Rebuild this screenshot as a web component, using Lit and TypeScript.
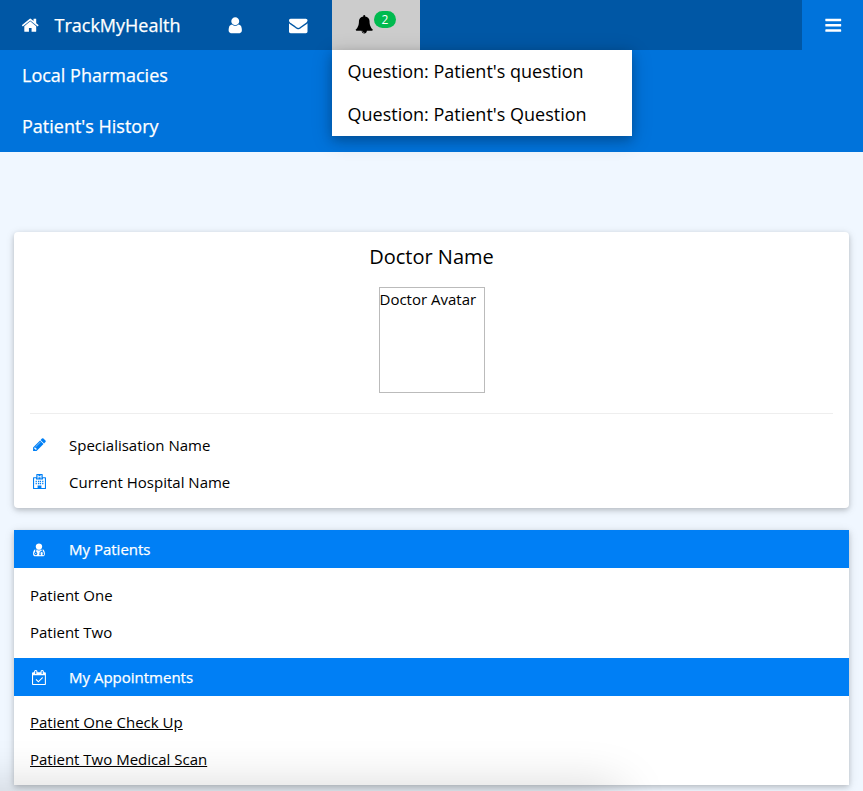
import { LitElement, html, css, svg } from 'lit';
import { customElement } from 'lit/decorators.js';

const ICONS = {
  home: svg`<path d="M1472 992v480q0 26-19 45t-45 19h-384v-384h-256v384h-384q-26 0-45-19t-19-45v-480q0-1 .5-3t.5-3l575-474 575 474q1 2 1 6zm223-69l-62 74q-8 9-21 11h-3q-13 0-21-7l-692-577-692 577q-12 8-24 7-13-2-21-11l-62-74q-8-10-7-23.500t11-21.500l719-599q32-26 76-26t76 26l244 204v-195q0-14 9-23t23-9h192q14 0 23 9t9 23v408l219 182q10 8 11 21.500t-7 23.500z"/>`,
  user: svg`<path d="M1536 1399q0 109-62.500 187t-150.500 78h-854q-88 0-150.500-78t-62.500-187q0-85 8.500-160.500t31.500-152 58.500-131 94-89 134.500-34.500q131 128 313 128t313-128q76 0 134.500 34.500t94 89 58.500 131 31.500 152 8.500 160.500zm-256-887q0 159-112.500 271.500t-271.500 112.500-271.500-112.500-112.500-271.500 112.500-271.500 271.500-112.500 271.500 112.500 112.500 271.500z"/>`,
  envelope: svg`<path d="M1792 710v794q0 66-47 113t-113 47h-1472q-66 0-113-47t-47-113v-794q44 49 101 87 362 246 497 345 57 42 92.500 65.500t94.500 48 110 24.500h2q51 0 110-24.500t94.500-48 92.500-65.500q170-123 498-345 57-39 100-87zm0-294q0 79-49 151t-122 123q-376 261-468 325-10 7-42.500 30.500t-54 38-52 32.500-57.500 27-50 9h-2q-23 0-50-9t-57.500-27-52-32.500-54-38-42.500-30.500q-91-64-262-182.500t-205-142.500q-62-42-117-115.500t-55-136.500q0-78 41.500-130t118.500-52h1472q65 0 112.500 47t47.500 113z"/>`,
  bell: svg`<path d="M912 1696q0-16-16-16-59 0-101.500-42.500t-42.500-101.500q0-16-16-16t-16 16q0 73 51.500 124.500t124.500 51.500q16 0 16-16zm816-288q0 52-38 90t-90 38h-448q0 106-75 181t-181 75-181-75-75-181h-448q-52 0-90-38t-38-90q50-42 91-88t85-119.500 74.500-158.500 50-206 19.500-260q0-152 117-282.500t307-158.500q-8-19-8-39 0-40 28-68t68-28 68 28 28 68q0 20-8 39 190 28 307 158.500t117 282.500q0 139 19.500 260t50 206 74.500 158.500 85 119.500 91 88z"/>`,
  bars: svg`<path d="M1664 1344v128q0 26-19 45t-45 19h-1408q-26 0-45-19t-19-45v-128q0-26 19-45t45-19h1408q26 0 45 19t19 45zm0-512v128q0 26-19 45t-45 19h-1408q-26 0-45-19t-19-45v-128q0-26 19-45t45-19h1408q26 0 45 19t19 45zm0-512v128q0 26-19 45t-45 19h-1408q-26 0-45-19t-19-45v-128q0-26 19-45t45-19h1408q26 0 45 19t19 45z"/>`,
  pencil: svg`<path d="M491 1536l91-91-235-235-91 91v107h128v128h107zm523-928q0-22-22-22-10 0-17 7l-542 542q-7 7-7 17 0 22 22 22 10 0 17-7l542-542q7-7 7-17zm-54-192l416 416-832 832h-416v-416zm683 96q0 53-37 90l-166 166-416-416 166-165q36-38 90-38 53 0 91 38l235 234q37 39 37 91z"/>`,
  // outline building with a tab on top: frame, H in the tab, windows and door
  hospital: svg`<path fill-rule="evenodd" d="M560 0h672q48 0 48 48v336h320q72 0 72 72v1264q0 72-72 72H192q-72 0-72-72V456q0-72 72-72h320V48q0-48 48-48zM660 120v420h110V380h252v160h110V120h-110v140H770V120zM250 514v1148h420v-300h452v300h420V514h-230v150H480V514zM430 800h150v150H430zm280 0h150v150H710zm222 0h150v150H932zm280 0h150v150h-150zM430 1060h150v150H430zm280 0h150v150H710zm222 0h150v150H932zm280 0h150v150h-150z"/>`,
  userMd: svg`<path d="M512 1376q0 26-19 45t-45 19-45-19-19-45 19-45 45-19 45 19 19 45zm1024 69q0 121-73 190t-194 69h-874q-121 0-194-69t-73-190q0-68 5.500-131t24-138 47.500-132.500 81-103 120-60.500q-22 52-22 120v203q-58 20-93 70t-35 111q0 80 56 136t136 56 136-56 56-136q0-61-35.500-111t-92.500-70v-203q0-62 25-93 132 104 295 104t295-104q25 31 25 93v64q-106 0-181 75t-75 181v89q-32 29-32 71 0 40 28 68t68 28 68-28 28-68q0-42-32-71v-89q0-52 38-90t90-38 90 38 38 90v89q-32 29-32 71 0 40 28 68t68 28 68-28 28-68q0-42-32-71v-89q0-68-34.500-127.500t-93.500-93.500q0-10 .5-42.500t0-48-2.500-41.500-7-47-13-40q68 15 120 60.500t81 103 47.500 132.500 24 138 5.500 131zm-320-893q0 159-112.500 271.500t-271.500 112.500-271.500-112.500-112.500-271.500 112.500-271.500 271.500-112.500 271.500 112.500 112.500 271.500z"/>`,
  calendar: svg`<path d="M1303 964l-512 512q-10 9-23 9t-23-9l-288-288q-9-10-9-23t9-22l46-46q9-9 22-9t23 9l220 220 444-444q10-9 23-9t22 9l46 46q9 9 9 22t-9 23zm-1175 700h1408v-1024h-1408v1024zm384-1216v-288q0-14-9-23t-23-9h-64q-14 0-23 9t-9 23v288q0 14 9 23t23 9h64q14 0 23-9t9-23zm768 0v-288q0-14-9-23t-23-9h-64q-14 0-23 9t-9 23v288q0 14 9 23t23 9h64q14 0 23-9t9-23zm384-64v1280q0 52-38 90t-90 38h-1408q-52 0-90-38t-38-90v-1280q0-52 38-90t90-38h128v-96q0-66 47-113t113-47h64q66 0 113 47t47 113v96h384v-96q0-66 47-113t113-47h64q66 0 113 47t47 113v96h128q52 0 90 38t38 90z"/>`,
};

const icon = (name: keyof typeof ICONS) =>
  html`<svg class="icon" viewBox="0 0 1792 1792" fill="currentColor">${ICONS[name]}</svg>`;

@customElement('app-root')
export class AppRoot extends LitElement {
  static styles = css`
    :host {
      display: block;
      font-family: 'Open Sans', 'Noto Sans', sans-serif;
      font-size: 15px;
      color: #000;
      background: #f0f7ff;
      height: 791px;
      overflow: hidden;
      position: relative;
    }

    .icon {
      width: 1em;
      height: 1em;
      display: block;
      flex: none;
    }

    .topbar {
      display: flex;
      height: 50px;
      background: #0073db;
      color: #fff;
    }

    .nav {
      flex: 1;
      display: flex;
      align-items: center;
      height: 50px;
      background: #0057a5;
      font-size: 18.5px;
    }

    .home {
      display: flex;
      align-items: center;
      gap: 15px;
      padding-left: 21px;
      width: 206px;
      box-sizing: border-box;
    }

    .brand {
      font-size: 18px;
      -webkit-text-stroke: 0.25px #fff;
    }

    .nav-link {
      display: flex;
      align-items: center;
      width: 63px;
      height: 50px;
      box-sizing: border-box;
      padding-left: 20px;
    }

    .bell {
      position: relative;
      width: 88px;
      height: 50px;
      box-sizing: border-box;
      padding: 15px 0 0 23px;
      background: #ccc;
      color: #000;
    }

    .badge {
      position: absolute;
      left: 42px;
      top: 11px;
      width: 22px;
      height: 17px;
      border-radius: 9px;
      background: #00ba4f;
      color: #fff;
      font-size: 12px;
      line-height: 17px;
      text-align: center;
    }

    .dropdown {
      position: absolute;
      left: 332px;
      top: 50px;
      width: 300px;
      background: #fff;
      font-size: 18px;
      box-shadow: 0 4px 10px 0 rgba(0, 0, 0, 0.2), 0 4px 20px 0 rgba(0, 0, 0, 0.19);
      z-index: 2;
    }

    .dropdown div {
      height: 43px;
      line-height: 43px;
      padding-left: 15.5px;
    }

    .menu {
      width: 61px;
      display: flex;
      align-items: center;
      justify-content: center;
      padding-left: 2px;
      box-sizing: border-box;
      font-size: 18.5px;
    }

    .subnav {
      background: #0073db;
      color: #fff;
      font-size: 18px;
      -webkit-text-stroke: 0.25px #fff;
    }

    .subnav div {
      height: 51px;
      line-height: 51px;
      padding-left: 22px;
    }

    .content {
      padding: 80px 14px 0;
    }

    .card {
      background: #fff;
      border-radius: 4px;
      box-shadow: 0 2px 5px 0 rgba(0, 0, 0, 0.16), 0 2px 10px 0 rgba(0, 0, 0, 0.12);
    }

    .profile {
      padding: 0 16px 8px;
      margin-bottom: 22px;
    }

    .profile h2 {
      margin: 0;
      font-size: 20px;
      font-weight: 400;
      line-height: 50px;
      text-align: center;
    }

    .avatar {
      width: 106px;
      height: 106px;
      box-sizing: border-box;
      margin: 5px auto 20px;
      border: 1px solid #bbb;
      line-height: 22px;
    }

    .profile hr {
      margin: 0 0 12px;
      border: 0;
      border-top: 1px solid #eee;
    }

    .row {
      display: flex;
      align-items: center;
      height: 37px;
      gap: 22px;
      padding-left: 2px;
    }

    .row .icon {
      color: #007ff5;
    }

    .lists {
      border-radius: 0;
      position: relative;
    }

    .section-head {
      display: flex;
      align-items: center;
      gap: 22px;
      height: 38px;
      padding-left: 18px;
      background: #007ff5;
      color: #fff;
      font-size: 15px;
      -webkit-text-stroke: 0.25px #fff;
    }

    .section-body {
      padding: 9px 16px 7px;
    }

    .section-body.links {
      padding-top: 8px;
    }

    .section-body div {
      height: 37px;
      line-height: 37px;
    }

    .section-body a {
      color: inherit;
      text-decoration: underline;
    }

    /* soft shadow rising from something just off the bottom of the page */
    .smudge {
      position: absolute;
      left: -60px;
      bottom: -40px;
      width: 660px;
      height: 30px;
      box-shadow: 0 0 50px 6px rgba(0, 0, 0, 0.18);
    }
  `;

  render() {
    return html`
      <div class="topbar">
        <div class="nav">
          <div class="home">${icon('home')}<span class="brand">TrackMyHealth</span></div>
          <div class="nav-link">${icon('user')}</div>
          <div class="nav-link">${icon('envelope')}</div>
          <div class="bell">${icon('bell')}<span class="badge">2</span></div>
        </div>
        <div class="menu">${icon('bars')}</div>
      </div>
      <div class="dropdown">
        <div>Question: Patient's question</div>
        <div>Question: Patient's Question</div>
      </div>
      <div class="subnav">
        <div>Local Pharmacies</div>
        <div>Patient's History</div>
      </div>
      <div class="content">
        <div class="card profile">
          <h2>Doctor Name</h2>
          <div class="avatar">Doctor Avatar</div>
          <hr />
          <div class="row">${icon('pencil')}<span>Specialisation Name</span></div>
          <div class="row">${icon('hospital')}<span>Current Hospital Name</span></div>
        </div>
        <div class="card lists">
          <div class="section-head">${icon('userMd')}<span>My Patients</span></div>
          <div class="section-body">
            <div>Patient One</div>
            <div>Patient Two</div>
          </div>
          <div class="section-head">${icon('calendar')}<span>My Appointments</span></div>
          <div class="section-body links">
            <div><a>Patient One Check Up</a></div>
            <div><a>Patient Two Medical Scan</a></div>
          </div>
          <div class="smudge"></div>
        </div>
      </div>
    `;
  }
}
